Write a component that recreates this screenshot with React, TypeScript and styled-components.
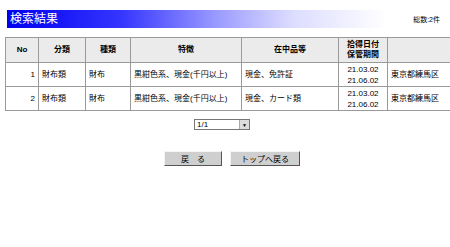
import styled, { createGlobalStyle } from 'styled-components';

const GlobalStyle = createGlobalStyle`
  html, body {
    margin: 0;
    padding: 0;
    background: #fff;
    overflow: hidden;
  }
  body {
    font-family: "Liberation Sans", "Noto Sans CJK JP", sans-serif;
    color: #000;
  }
`;

const Page = styled.div`
  width: 470px;
  padding: 10px 0 0 5px;
`;

const TitleRow = styled.div`
  display: flex;
  align-items: center;
  justify-content: space-between;
  height: 18px;
  margin-bottom: 9px;
`;

const TitleBar = styled.h1`
  margin: 0 0 0 2px;
  width: 380px;
  height: 18px;
  line-height: 18px;
  padding-left: 3px;
  box-sizing: border-box;
  font-size: 12px;
  font-weight: normal;
  color: #fff;
  background: linear-gradient(to right, #0000f0 0%, #3535ff 30%, #9a9aff 55%, #dcdcff 75%, #fff 100%);
`;

const Total = styled.span`
  font-size: 7px;
  margin-right: 35px;
`;

const Table = styled.table`
  width: 460px;
  table-layout: fixed;
  border-collapse: collapse;
  border: 1px solid #8f8f8f;
  font-size: 8px;
`;

const Th = styled.th`
  height: 24px;
  background: #ebebeb;
  border: 1px solid #9a9a9a;
  font-size: 8px;
  font-weight: bold;
  line-height: 10px;
  padding: 0;
`;

const Td = styled.td<{ $align?: string }>`
  height: 23px;
  border: 1px solid #9a9a9a;
  padding: 0 3px;
  text-align: ${(p) => p.$align || 'left'};
  line-height: 11px;
  white-space: nowrap;
  overflow: hidden;
`;

const Pager = styled.div`
  display: flex;
  justify-content: center;
  margin: 8px 0 0 -8px;
  width: 450px;
`;

const Select = styled.div`
  display: flex;
  align-items: center;
  justify-content: space-between;
  width: 56px;
  height: 11px;
  border: 1px solid #777;
  font-size: 8px;
  padding-left: 2px;
  box-sizing: border-box;
`;

const Arrow = styled.span`
  width: 9px;
  height: 9px;
  background: #dcdcdc;
  border-left: 1px solid #aaa;
  display: flex;
  align-items: center;
  justify-content: center;
  font-size: 5px;
`;

const Buttons = styled.div`
  display: flex;
  justify-content: center;
  gap: 8px;
  margin: 21px 0 0 -8px;
  width: 470px;
`;

const Button = styled.button<{ $w: number }>`
  width: ${(p) => p.$w}px;
  height: 15px;
  padding: 0;
  font-family: inherit;
  font-size: 8px;
  background: #cfcfcf;
  border: 1px solid;
  border-color: #f4f4f4 #555 #555 #f4f4f4;
  color: #000;
`;

const rows = [
  { no: 1, cat: '財布類', kind: '財布', feat: '黒紺色系、現金(千円以上)', items: '現金、免許証', loc: '東京都練馬区' },
  { no: 2, cat: '財布類', kind: '財布', feat: '黒紺色系、現金(千円以上)', items: '現金、カード類', loc: '東京都練馬区' },
];

export default function App() {
  return (
    <>
      <GlobalStyle />
      <Page>
        <TitleRow>
          <TitleBar>検索結果</TitleBar>
          <Total>総数:2件</Total>
        </TitleRow>
        <Table>
          <colgroup>
            <col style={{ width: 33 }} />
            <col style={{ width: 47 }} />
            <col style={{ width: 45 }} />
            <col style={{ width: 111 }} />
            <col style={{ width: 97 }} />
            <col style={{ width: 49 }} />
            <col />
          </colgroup>
          <thead>
            <tr>
              <Th>No</Th>
              <Th>分類</Th>
              <Th>種類</Th>
              <Th>特徴</Th>
              <Th>在中品等</Th>
              <Th>拾得日付<br />保管期間</Th>
              <Th></Th>
            </tr>
          </thead>
          <tbody>
            {rows.map((r) => (
              <tr key={r.no}>
                <Td $align="right">{r.no}</Td>
                <Td>{r.cat}</Td>
                <Td>{r.kind}</Td>
                <Td>{r.feat}</Td>
                <Td>{r.items}</Td>
                <Td $align="center">21.03.02<br />21.06.02</Td>
                <Td>{r.loc}</Td>
              </tr>
            ))}
          </tbody>
        </Table>
        <Pager>
          <Select>
            1/1
            <Arrow>▼</Arrow>
          </Select>
        </Pager>
        <Buttons>
          <Button $w={58}>戻　る</Button>
          <Button $w={70}>トップへ戻る</Button>
        </Buttons>
      </Page>
    </>
  );
}
